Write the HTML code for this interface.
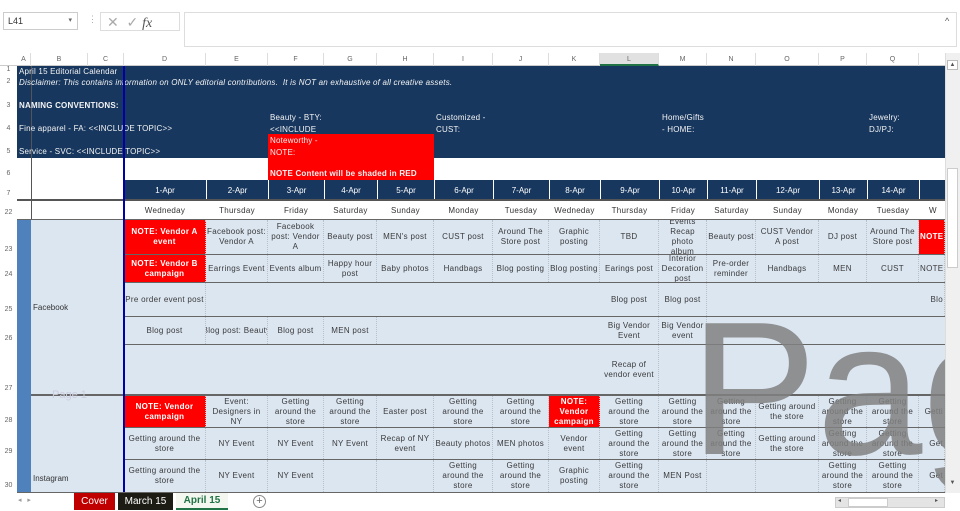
<!DOCTYPE html>
<html><head><meta charset="utf-8"><style>
*{margin:0;padding:0;box-sizing:border-box}
body{width:960px;height:511px;overflow:hidden;background:#fff;font-family:"Liberation Sans",sans-serif;position:relative;color:#333}
.a{position:absolute}
.c{position:absolute;display:flex;align-items:center;justify-content:center;text-align:center;font-size:8px;line-height:10px;overflow:hidden;color:#3a3a3a;border-right:1px dotted #b8c0cc;padding:0 1px;letter-spacing:.3px}
.r{background:#f00;color:#fff;font-weight:bold}
.t{position:absolute;font-size:8px;color:#f4f4f4;white-space:nowrap;line-height:10px;letter-spacing:.2px}
.rh{position:absolute;left:0;width:17px;font-size:7px;color:#666;text-align:center}
.ch{position:absolute;top:53px;height:13px;font-size:7px;color:#666;text-align:center;line-height:13px;border-right:1px solid #ddd}
.d{position:absolute;top:180px;height:20px;color:#fff;font-size:8px;display:flex;align-items:center;justify-content:center;border-left:1px solid #fff}
.w{position:absolute;top:200px;height:20px;font-size:8px;display:flex;align-items:center;justify-content:center;color:#333;letter-spacing:.3px}
.hl{position:absolute;left:31px;width:914px;height:1px;background:#666}
</style></head><body>
<div class="a" style="left:3px;top:12px;width:75px;height:18px;border:1px solid #ccc;font-size:9px;padding:3px 4px;color:#333">L41<span style="position:absolute;right:5px;top:3px;font-size:7px;color:#666">▾</span></div>
<div class="a" style="left:88px;top:14px;font-size:9px;color:#aaa">⋮</div>
<div class="a" style="left:100px;top:12px;width:80px;height:19px;border:1px solid #ddd;font-size:14px;color:#aaa;line-height:18px;padding-left:6px">✕ &nbsp;✓ <i style="font-family:'Liberation Serif',serif;color:#555;font-size:14px">fx</i></div>
<div class="a" style="left:184px;top:12px;width:773px;height:35px;border:1px solid #ddd"></div>
<div class="a" style="left:945px;top:16px;font-size:9px;color:#555">^</div>
<div class="a" style="left:0;top:53px;width:945px;height:13px;background:#fff;border-bottom:1px solid #ccc"></div>
<div class="ch" style="left:17px;width:14px">A</div><div class="ch" style="left:31px;width:57px">B</div><div class="ch" style="left:88px;width:36px">C</div>
<div class="ch" style="left:124px;width:82px">D</div><div class="ch" style="left:206px;width:62px">E</div><div class="ch" style="left:268px;width:56px">F</div><div class="ch" style="left:324px;width:53px">G</div><div class="ch" style="left:377px;width:57px">H</div><div class="ch" style="left:434px;width:59px">I</div><div class="ch" style="left:493px;width:56px">J</div><div class="ch" style="left:549px;width:51px">K</div><div class="ch" style="left:600px;width:59px;background:#e1e1e1;border-bottom:2px solid #217346">L</div><div class="ch" style="left:659px;width:48px">M</div><div class="ch" style="left:707px;width:49px">N</div><div class="ch" style="left:756px;width:63px">O</div><div class="ch" style="left:819px;width:48px">P</div><div class="ch" style="left:867px;width:52px">Q</div>
<div class="rh" style="top:66px">1</div><div class="rh" style="top:78px">2</div><div class="rh" style="top:102px">3</div><div class="rh" style="top:125px">4</div><div class="rh" style="top:148px">5</div><div class="rh" style="top:170px">6</div><div class="rh" style="top:190px">7</div><div class="rh" style="top:209px">22</div><div class="rh" style="top:246px">23</div><div class="rh" style="top:271px">24</div><div class="rh" style="top:306px">25</div><div class="rh" style="top:335px">26</div><div class="rh" style="top:385px">27</div><div class="rh" style="top:417px">28</div><div class="rh" style="top:448px">29</div><div class="rh" style="top:482px">30</div>
<div class="a" style="left:17px;top:66px;width:928px;height:92px;background:#17375e"></div>
<div class="a" style="left:124px;top:180px;width:821px;height:20px;background:#17375e"></div>
<div class="a" style="left:268px;top:134px;width:166px;height:46px;background:#f00"></div>
<div class="a" style="left:31px;top:66px;width:1px;height:426px;background:#555"></div>
<div class="t" style="left:19px;top:67px">April 15 Editorial Calendar</div>
<div class="t" style="left:19px;top:78px;font-style:italic">Disclaimer: This contains information on ONLY editorial contributions.&nbsp; It is NOT an exhaustive of all creative assets.</div>
<div class="t" style="left:19px;top:101px;font-weight:bold">NAMING CONVENTIONS:</div>
<div class="t" style="left:19px;top:124px">Fine apparel - FA: &lt;&lt;INCLUDE TOPIC&gt;&gt;</div>
<div class="t" style="left:19px;top:147px">Service - SVC: &lt;&lt;INCLUDE TOPIC&gt;&gt;</div>
<div class="t" style="left:270px;top:113px">Beauty - BTY:</div><div class="t" style="left:270px;top:125px">&lt;&lt;INCLUDE</div>
<div class="t" style="left:270px;top:136px">Noteworthy -</div><div class="t" style="left:270px;top:148px">NOTE:</div>
<div class="t" style="left:270px;top:169px;font-weight:bold">NOTE Content will be shaded in RED</div>
<div class="t" style="left:436px;top:113px">Customized -</div><div class="t" style="left:436px;top:125px">CUST:</div>
<div class="t" style="left:662px;top:113px">Home/Gifts</div><div class="t" style="left:662px;top:125px">- HOME:</div>
<div class="t" style="left:869px;top:113px">Jewelry:</div><div class="t" style="left:869px;top:125px">DJ/PJ:</div>
<div class="d" style="left:124px;width:82px;border-left:0">1-Apr</div><div class="d" style="left:206px;width:62px">2-Apr</div><div class="d" style="left:268px;width:56px">3-Apr</div><div class="d" style="left:324px;width:53px">4-Apr</div><div class="d" style="left:377px;width:57px">5-Apr</div><div class="d" style="left:434px;width:59px">6-Apr</div><div class="d" style="left:493px;width:56px">7-Apr</div><div class="d" style="left:549px;width:51px">8-Apr</div><div class="d" style="left:600px;width:59px">9-Apr</div><div class="d" style="left:659px;width:48px">10-Apr</div><div class="d" style="left:707px;width:49px">11-Apr</div><div class="d" style="left:756px;width:63px">12-Apr</div><div class="d" style="left:819px;width:48px">13-Apr</div><div class="d" style="left:867px;width:52px">14-Apr</div><div class="d" style="left:919px;width:26px"></div>
<div class="a" style="left:17px;top:199px;width:928px;height:2px;background:#555"></div>
<div class="w" style="left:124px;width:82px">Wedneday</div><div class="w" style="left:206px;width:62px">Thursday</div><div class="w" style="left:268px;width:56px">Friday</div><div class="w" style="left:324px;width:53px">Saturday</div><div class="w" style="left:377px;width:57px">Sunday</div><div class="w" style="left:434px;width:59px">Monday</div><div class="w" style="left:493px;width:56px">Tuesday</div><div class="w" style="left:549px;width:51px">Wedneday</div><div class="w" style="left:600px;width:59px">Thursday</div><div class="w" style="left:659px;width:48px">Friday</div><div class="w" style="left:707px;width:49px">Saturday</div><div class="w" style="left:756px;width:63px">Sunday</div><div class="w" style="left:819px;width:48px">Monday</div><div class="w" style="left:867px;width:52px">Tuesday</div><div class="w" style="left:919px;width:26px;justify-content:flex-start;padding-left:10px">W</div>
<div class="a" style="left:31px;top:220px;width:914px;height:272px;background:#dce6f1"></div>
<div class="a" style="left:17px;top:220px;width:14px;height:272px;background:#4f81bd"></div>
<div class="a" style="left:17px;top:219px;width:928px;height:1px;background:#666"></div>
<div class="hl" style="top:254px;left:124px;width:821px"></div><div class="hl" style="top:282px;left:124px;width:821px"></div><div class="hl" style="top:316px;left:124px;width:821px"></div><div class="hl" style="top:344px;left:124px;width:821px"></div><div class="hl" style="top:394px;height:2px"></div><div class="hl" style="top:427px;left:124px;width:821px"></div><div class="hl" style="top:459px;left:124px;width:821px"></div><div class="hl" style="top:492px;left:17px;width:928px"></div>
<div class="a" style="left:33px;top:303px;font-size:8px">Facebook</div>
<div class="a" style="left:33px;top:474px;font-size:8px">Instagram</div>
<div class="a" style="left:52px;top:389px;font-size:11px;color:#ccd">Page 1</div>

<div class="c r" style="left:124px;top:220px;width:82px;height:34px">NOTE: Vendor A event</div>
<div class="c" style="left:206px;top:220px;width:62px;height:34px">Facebook post: Vendor A</div>
<div class="c" style="left:268px;top:220px;width:56px;height:34px">Facebook post: Vendor A</div>
<div class="c" style="left:324px;top:220px;width:53px;height:34px">Beauty post</div>
<div class="c" style="left:377px;top:220px;width:57px;height:34px">MEN's post</div>
<div class="c" style="left:434px;top:220px;width:59px;height:34px">CUST post</div>
<div class="c" style="left:493px;top:220px;width:56px;height:34px">Around The Store post</div>
<div class="c" style="left:549px;top:220px;width:51px;height:34px">Graphic posting</div>
<div class="c" style="left:600px;top:220px;width:59px;height:34px">TBD</div>
<div class="c" style="left:659px;top:220px;width:48px;height:34px">Events Recap photo album</div>
<div class="c" style="left:707px;top:220px;width:49px;height:34px">Beauty post</div>
<div class="c" style="left:756px;top:220px;width:63px;height:34px">CUST Vendor A post</div>
<div class="c" style="left:819px;top:220px;width:48px;height:34px">DJ post</div>
<div class="c" style="left:867px;top:220px;width:52px;height:34px">Around The Store post</div>
<div class="c r" style="left:919px;top:220px;width:26px;height:34px;justify-content:flex-start">NOTE</div>
<div class="c r" style="left:124px;top:255px;width:82px;height:27px">NOTE: Vendor B campaign</div>
<div class="c" style="left:206px;top:255px;width:62px;height:27px">Earrings Event</div>
<div class="c" style="left:268px;top:255px;width:56px;height:27px">Events album</div>
<div class="c" style="left:324px;top:255px;width:53px;height:27px">Happy hour post</div>
<div class="c" style="left:377px;top:255px;width:57px;height:27px">Baby photos</div>
<div class="c" style="left:434px;top:255px;width:59px;height:27px">Handbags</div>
<div class="c" style="left:493px;top:255px;width:56px;height:27px">Blog posting</div>
<div class="c" style="left:549px;top:255px;width:51px;height:27px">Blog posting</div>
<div class="c" style="left:600px;top:255px;width:59px;height:27px">Earings post</div>
<div class="c" style="left:659px;top:255px;width:48px;height:27px">Interior Decoration post</div>
<div class="c" style="left:707px;top:255px;width:49px;height:27px">Pre-order reminder</div>
<div class="c" style="left:756px;top:255px;width:63px;height:27px">Handbags</div>
<div class="c" style="left:819px;top:255px;width:48px;height:27px">MEN</div>
<div class="c" style="left:867px;top:255px;width:52px;height:27px">CUST</div>
<div class="c" style="left:919px;top:255px;width:26px;height:27px;justify-content:flex-start">NOTE</div>
<div class="c" style="left:124px;top:283px;width:82px;height:33px">Pre order event post</div>
<div class="c" style="left:600px;top:283px;width:59px;height:33px">Blog post</div>
<div class="c" style="left:659px;top:283px;width:48px;height:33px">Blog post</div>
<div class="c" style="left:919px;top:283px;width:26px;height:33px;justify-content:flex-end">Blo</div>
<div class="c" style="left:124px;top:317px;width:82px;height:27px">Blog post</div>
<div class="c" style="left:206px;top:317px;width:62px;height:27px;white-space:nowrap">Blog post: Beauty</div>
<div class="c" style="left:268px;top:317px;width:56px;height:27px">Blog post</div>
<div class="c" style="left:324px;top:317px;width:53px;height:27px">MEN post</div>
<div class="c" style="left:600px;top:317px;width:59px;height:27px">Big Vendor Event</div>
<div class="c" style="left:659px;top:317px;width:48px;height:27px">Big Vendor event</div>
<div class="c" style="left:600px;top:345px;width:59px;height:49px">Recap of vendor event</div>
<div class="c r" style="left:124px;top:396px;width:82px;height:31px">NOTE: Vendor campaign</div>
<div class="c" style="left:206px;top:396px;width:62px;height:31px">Event: Designers in NY</div>
<div class="c" style="left:268px;top:396px;width:56px;height:31px">Getting around the store</div>
<div class="c" style="left:324px;top:396px;width:53px;height:31px">Getting around the store</div>
<div class="c" style="left:377px;top:396px;width:57px;height:31px">Easter post</div>
<div class="c" style="left:434px;top:396px;width:59px;height:31px">Getting around the store</div>
<div class="c" style="left:493px;top:396px;width:56px;height:31px">Getting around the store</div>
<div class="c r" style="left:549px;top:396px;width:51px;height:31px">NOTE: Vendor campaign</div>
<div class="c" style="left:600px;top:396px;width:59px;height:31px">Getting around the store</div>
<div class="c" style="left:659px;top:396px;width:48px;height:31px">Getting around the store</div>
<div class="c" style="left:707px;top:396px;width:49px;height:31px">Getting around the store</div>
<div class="c" style="left:756px;top:396px;width:63px;height:31px">Getting around the store</div>
<div class="c" style="left:819px;top:396px;width:48px;height:31px">Getting around the store</div>
<div class="c" style="left:867px;top:396px;width:52px;height:31px">Getting around the store</div>
<div class="c" style="left:919px;top:396px;width:26px;height:31px;justify-content:flex-end;white-space:nowrap">Getti</div>
<div class="c" style="left:124px;top:428px;width:82px;height:31px">Getting around the store</div>
<div class="c" style="left:206px;top:428px;width:62px;height:31px">NY Event</div>
<div class="c" style="left:268px;top:428px;width:56px;height:31px">NY Event</div>
<div class="c" style="left:324px;top:428px;width:53px;height:31px">NY Event</div>
<div class="c" style="left:377px;top:428px;width:57px;height:31px">Recap of NY event</div>
<div class="c" style="left:434px;top:428px;width:59px;height:31px">Beauty photos</div>
<div class="c" style="left:493px;top:428px;width:56px;height:31px">MEN photos</div>
<div class="c" style="left:549px;top:428px;width:51px;height:31px">Vendor event</div>
<div class="c" style="left:600px;top:428px;width:59px;height:31px">Getting around the store</div>
<div class="c" style="left:659px;top:428px;width:48px;height:31px">Getting around the store</div>
<div class="c" style="left:707px;top:428px;width:49px;height:31px">Getting around the store</div>
<div class="c" style="left:756px;top:428px;width:63px;height:31px">Getting around the store</div>
<div class="c" style="left:819px;top:428px;width:48px;height:31px">Getting around the store</div>
<div class="c" style="left:867px;top:428px;width:52px;height:31px">Getting around the store</div>
<div class="c" style="left:919px;top:428px;width:26px;height:31px;justify-content:flex-end">Get</div>
<div class="c" style="left:124px;top:460px;width:82px;height:32px">Getting around the store</div>
<div class="c" style="left:206px;top:460px;width:62px;height:32px">NY Event</div>
<div class="c" style="left:268px;top:460px;width:56px;height:32px">NY Event</div>
<div class="c" style="left:324px;top:460px;width:53px;height:32px"></div>
<div class="c" style="left:377px;top:460px;width:57px;height:32px"></div>
<div class="c" style="left:434px;top:460px;width:59px;height:32px">Getting around the store</div>
<div class="c" style="left:493px;top:460px;width:56px;height:32px">Getting around the store</div>
<div class="c" style="left:549px;top:460px;width:51px;height:32px">Graphic posting</div>
<div class="c" style="left:600px;top:460px;width:59px;height:32px">Getting around the store</div>
<div class="c" style="left:659px;top:460px;width:48px;height:32px">MEN Post</div>
<div class="c" style="left:707px;top:460px;width:49px;height:32px"></div>
<div class="c" style="left:756px;top:460px;width:63px;height:32px"></div>
<div class="c" style="left:819px;top:460px;width:48px;height:32px">Getting around the store</div>
<div class="c" style="left:867px;top:460px;width:52px;height:32px">Getting around the store</div>
<div class="c" style="left:919px;top:460px;width:26px;height:32px;justify-content:flex-end">Get</div>
<div class="a" style="left:123px;top:66px;width:2px;height:426px;background:#0000a8"></div>
<div class="a" style="left:0;top:0;width:945px;height:492px;overflow:hidden;pointer-events:none">
<div class="a" style="left:690px;top:294px;font-size:190px;line-height:190px;color:rgba(128,128,128,.85);white-space:nowrap">Pag</div></div>
<div class="a" style="left:945px;top:53px;width:15px;height:440px;background:#f0f0f0;border-left:1px solid #ddd"></div>
<div class="a" style="left:947px;top:60px;width:11px;height:10px;border:1px solid #bbb;background:#fff;font-size:6px;text-align:center;line-height:8px;color:#555">▲</div>
<div class="a" style="left:947px;top:168px;width:11px;height:100px;border:1px solid #ccc;background:#fff"></div>
<div class="a" style="left:947px;top:480px;width:11px;height:10px;font-size:6px;text-align:center;color:#555">▼</div>
<div class="a" style="left:0;top:493px;width:960px;height:18px;background:#fff"></div>
<div class="a" style="left:18px;top:496px;font-size:7px;color:#999">◂ &nbsp; ▸</div>
<div class="a" style="left:74px;top:493px;width:41px;height:17px;background:#c00000;color:#fff;font-size:10px;text-align:center;line-height:17px">Cover</div>
<div class="a" style="left:118px;top:493px;width:55px;height:17px;background:#1c1c14;color:#fff;font-size:10px;text-align:center;line-height:17px">March 15</div>
<div class="a" style="left:176px;top:493px;width:52px;height:17px;background:#f4f7f0;color:#217346;font-weight:bold;font-size:10px;text-align:center;line-height:16px;border-bottom:2px solid #217346">April 15</div>
<div class="a" style="left:253px;top:495px;width:13px;height:13px;border:1px solid #888;border-radius:50%;font-size:11px;line-height:11px;text-align:center;color:#666">+</div>
<div class="a" style="left:835px;top:497px;width:110px;height:11px;background:#e4e4e4;border:1px solid #ccc"></div>
<div class="a" style="left:848px;top:498px;width:40px;height:9px;background:#fff;border:1px solid #ccc"></div>
<div class="a" style="left:838px;top:497px;font-size:6px;color:#555">◂</div><div class="a" style="left:935px;top:497px;font-size:6px;color:#555">▸</div>
</body></html>
